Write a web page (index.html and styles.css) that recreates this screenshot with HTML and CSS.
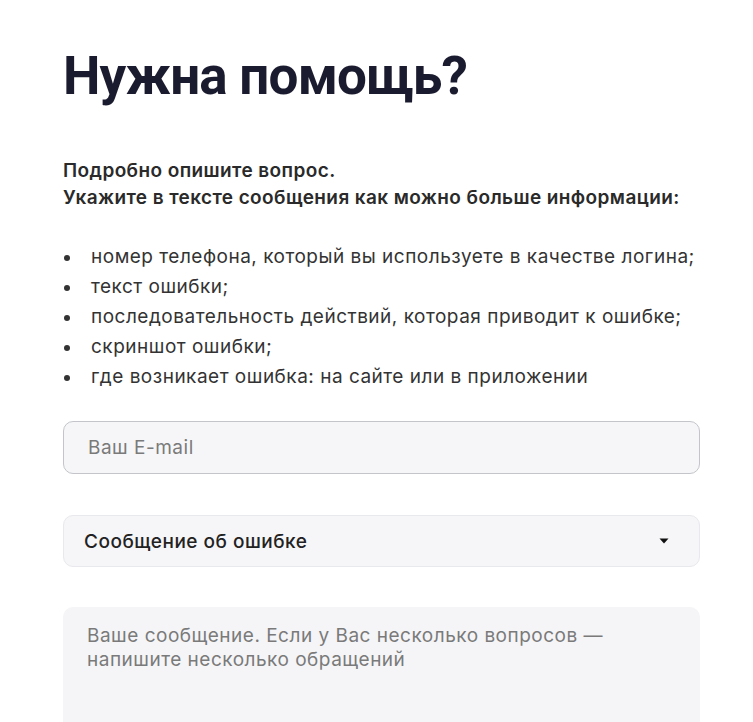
FILE: index.html
```html
<!DOCTYPE html>
<html lang="ru">
<head>
    <meta charset="UTF-8">
    <title>Нужна помощь?</title>
    <link rel="stylesheet" href="styles.css">
</head>
<body>
    <div class="help">
        <h1 class="help-title">Нужна помощь?</h1>
        <p class="help-lead">
            Подробно опишите вопрос.<br>
            Укажите в тексте сообщения как можно больше информации:
        </p>
        <ul class="help-list">
            <li>номер телефона, который вы используете в качестве логина;</li>
            <li>текст ошибки;</li>
            <li>последовательность действий, которая приводит к ошибке;</li>
            <li>скриншот ошибки;</li>
            <li>где возникает ошибка: на сайте или в приложении</li>
        </ul>
        <form class="help-form">
            <input type="text" class="field field-email" placeholder="Ваш E-mail">
            <div class="field field-select">
                <span>Сообщение об ошибке</span>
                <svg class="arrow" width="10" height="6" viewBox="0 0 10 6"><path d="M0.5 0.5h9L5 5.5z" fill="#111"/></svg>
            </div>
            <textarea class="field field-text" placeholder="Ваше сообщение. Если у Вас несколько вопросов — напишите несколько обращений"></textarea>
        </form>
    </div>
</body>
</html>
```

FILE: styles.css
```css
body{
    margin: 0;
    background-color: #ffffff;
    font-family: Inter, "Liberation Sans", sans-serif;
    color: #2b2b2b;
}
.help{
    padding: 44px 53px 0 63px;
}
.help-title{
    margin: 0;
    font-family: Roboto, Inter, sans-serif;
    font-size: 53px;
    font-weight: 700;
    line-height: 64px;
    letter-spacing: -0.8px;
    color: #1b1b2f;
}
.help-lead{
    margin: 49px 0 0;
    font-size: 19px;
    font-weight: 600;
    line-height: 27px;
    letter-spacing: 0.4px;
    color: #2a2a2a;
}
.help-list{
    margin: 31px 0 0;
    padding: 0;
    list-style: none;
    font-size: 19px;
    line-height: 30px;
    letter-spacing: 0.5px;
    color: #333333;
}
.help-list li{
    display: flex;
    align-items: center;
}
.help-list li::before{
    content: "";
    flex: none;
    width: 6px;
    height: 6px;
    margin: 2px 21px 0 1px;
    border-radius: 50%;
    background-color: #333333;
}
.help-form{
    margin-top: 29px;
    display: flex;
    flex-direction: column;
    gap: 41px;
}
.field{
    box-sizing: border-box;
    width: 100%;
    border-radius: 10px;
    background-color: #f6f6f8;
    font-family: Inter, "Liberation Sans", sans-serif;
    font-size: 19px;
    letter-spacing: 0.5px;
    outline: none;
}
.field::placeholder{
    color: #7a7a7a;
}
.field-email{
    height: 53px;
    padding: 0 24px;
    border: 1px solid #c3c5cb;
}
.field-select{
    height: 52px;
    padding: 0 30px 0 20px;
    border: 1px solid #e8e9ed;
    display: flex;
    align-items: center;
    justify-content: space-between;
    color: #222222;
    font-weight: 500;
}
.field-text{
    height: 160px;
    margin-top: -1px;
    padding: 17px 24px;
    border: none;
    resize: none;
    line-height: 24px;
    background-color: #f5f5f7;
}
```
